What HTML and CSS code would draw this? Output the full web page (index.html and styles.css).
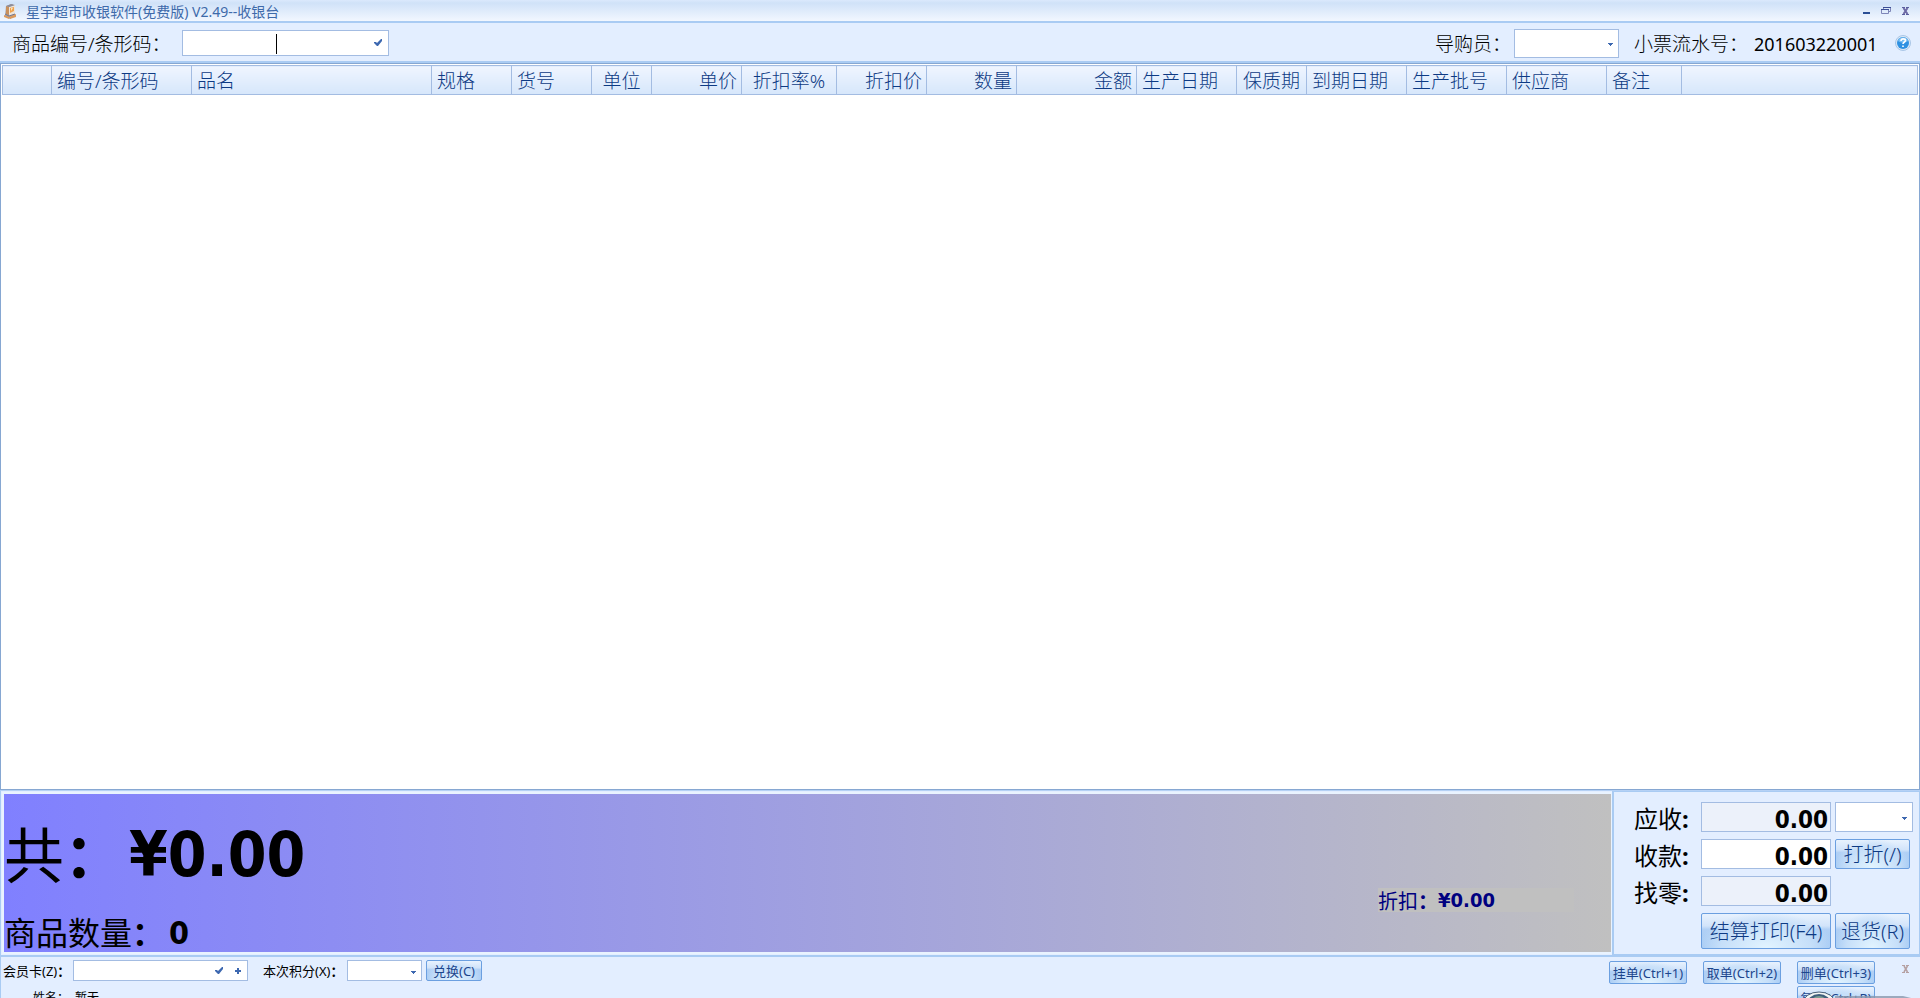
FILE: index.html
```html
<!DOCTYPE html>
<html lang="zh-CN">
<head>
<meta charset="utf-8">
<title>星宇超市收银软件(免费版) V2.49--收银台</title>
<link rel="stylesheet" href="styles.css">
</head>
<body>
<div class="window">
  <header class="titlebar">
    <svg class="app-icon" viewBox="0 0 16 18" aria-hidden="true">
      <path d="M4 4l6-2 3 2v9l-5 4-5-3z" fill="#a9a2a6"/>
      <path d="M4 4l3 1v8l-3-1z" fill="#c9905c"/>
      <path d="M7 5l6-2v9l-6 2z" fill="#ece4da"/>
      <path d="M4 4l5-2 4 1-6 2z" fill="#8e8d98"/>
      <path d="M8 6l4-1v4L8 11z" fill="#f0a24c"/>
      <path d="M9 6l2 0-2 3z" fill="#fbe3bd"/>
      <path d="M2 13l5 2v2l-5-2zM7 15l7-3v3l-6 2z" fill="#dc9a5c"/>
      <path d="M3 12l4 2 6-2" fill="none" stroke="#77768a"/>
    </svg>
    <h1 class="title">星宇超市收银软件(免费版) V2.49--收银台</h1>
    <div class="window-controls">
      <button class="plain" aria-label="最小化"><svg viewBox="0 0 10 10"><path d="M1 6h7v2H1z" fill="#2b4f96"/></svg></button>
      <button class="plain" aria-label="还原"><svg viewBox="0 0 10 10"><path d="M2.500 3V1.500h7V5.500H8M.5 3.500h7v4h-7z" fill="none" stroke="#7f86b8"/><path d="M2 1h8v1H2zM0 3h8v1H0z" fill="#3b4f96"/></svg></button>
      <button class="plain" aria-label="关闭"><svg viewBox="0 0 10 10"><path d="M3.500 2l4 6M7.500 2l-4 6" fill="none" stroke="#6d6aa5" stroke-width="2"/><path d="M2 1h3v1H2zM6 1h3v1H6zM2 8h3v1H2zM6 8h3v1H6z" fill="#5a5f9f"/></svg></button>
    </div>
  </header>

  <section class="toolbar">
    <label class="big-label code-label" for="code">商品编号/条形码：</label>
    <div class="field code-field">
      <input id="code" type="text">
      <span class="caret"></span>
      <svg class="tick" viewBox="0 0 8 8" aria-hidden="true"><path d="M0 3h2l1 1 4-4h1v2L4 7H3L0 4z" fill="#3d68b0"/></svg>
    </div>
    <label class="big-label guide-label" for="guide">导购员：</label>
    <div class="field guide-field">
      <select id="guide"><option></option></select>
      <svg class="arrow" viewBox="0 0 5 3" aria-hidden="true"><path d="M0 0h5v1H4v1H3v1H2V2H1V1H0z" fill="#3d68b0"/></svg>
    </div>
    <span class="big-label serial-label">小票流水号：</span>
    <output class="serial">201603220001</output>
    <button class="plain help" aria-label="帮助">
      <svg viewBox="0 0 16 16"><circle cx="8" cy="8" r="7.500" fill="#dbe8f6" stroke="#a9c6e6"/><circle cx="8" cy="8" r="6" fill="#2f91e2"/><path d="M3 6c1-5 9-5 10 0-3 2-7 2-10 0z" fill="#78bdf2"/><path d="M6 6c0-3 4.500-2.500 4.500-.5C10.500 7 8 7 8 9M8 10.500v1.500" fill="none" stroke="#fff" stroke-width="1.600"/></svg>
    </button>
  </section>

  <main class="grid-area">
    <table class="items">
      <colgroup><col class="w49"><col class="w140"><col class="w240"><col class="w80"><col class="w80"><col class="w60"><col class="w90"><col class="w95"><col class="w90"><col class="w90"><col class="w120"><col class="w100"><col class="w70"><col class="w100"><col class="w100"><col class="w100"><col class="w75"><col></colgroup>
      <thead><tr>
        <th></th><th>编号/条形码</th><th>品名</th><th>规格</th><th>货号</th><th class="center">单位</th><th class="right">单价</th><th class="center">折扣率%</th><th class="right">折扣价</th><th class="right">数量</th><th class="right">金额</th><th>生产日期</th><th class="center">保质期</th><th>到期日期</th><th>生产批号</th><th>供应商</th><th>备注</th><th></th>
      </tr></thead>
      <tbody></tbody>
    </table>
  </main>

  <section class="summary">
    <div class="totals">
      <div class="total"><span>共<b>：</b></span><strong>¥0.00</strong></div>
      <div class="count"><span>商品数量<b>：</b></span><strong>0</strong></div>
      <div class="discount"><span>折扣<b>：</b></span><strong>¥0.00</strong></div>
    </div>
    <form class="payment">
      <label for="due">应收<b>:</b></label>
      <input id="due" class="amount readonly" value="0.00" readonly>
      <div class="field method"><select aria-label="付款方式"><option></option></select>
        <svg class="arrow" viewBox="0 0 5 3" aria-hidden="true"><path d="M0 0h5v1H4v1H3v1H2V2H1V1H0z" fill="#3d68b0"/></svg></div>
      <label for="paid">收款<b>:</b></label>
      <input id="paid" class="amount" value="0.00">
      <button type="button" class="btn large side">打折(/)</button>
      <label for="change">找零<b>:</b></label>
      <input id="change" class="amount readonly" value="0.00" readonly>
      <button type="button" class="btn large settle">结算打印(F4)</button>
      <button type="button" class="btn large side refund">退货(R)</button>
    </form>
  </section>

  <footer class="footer">
    <div class="member">
      <div class="member-row">
        <label class="card-label" for="card">会员卡(Z)<b>：</b></label>
        <div class="field card-field"><input id="card" type="text">
          <svg class="tick" viewBox="0 0 8 8" aria-hidden="true"><path d="M0 3h2l1 1 4-4h1v2L4 7H3L0 4z" fill="#3d68b0"/></svg>
          <svg class="plus" viewBox="0 0 6 6" aria-hidden="true"><path d="M2 0h2v2h2v2H4v2H2V4H0V2h2z" fill="#3d68b0"/></svg></div>
        <label class="points-label" for="points">本次积分(X)<b>：</b></label>
        <div class="field points-field"><select id="points"><option></option></select>
          <svg class="arrow" viewBox="0 0 5 3" aria-hidden="true"><path d="M0 0h5v1H4v1H3v1H2V2H1V1H0z" fill="#3d68b0"/></svg></div>
        <button class="btn small exchange">兑换(C)</button>
      </div>
      <div class="name-row"><span class="name-label">姓名：</span><span>暂无</span></div>
    </div>
    <div class="orders">
      <button class="btn small">挂单(Ctrl+1)</button>
      <button class="btn small">取单(Ctrl+2)</button>
      <button class="btn small">删单(Ctrl+3)</button>
      <button class="btn small reprint">复制(Ctrl+R)</button>
    </div>
    <button class="plain dismiss" aria-label="关闭面板"><svg viewBox="0 0 8 8"><path d="M2 1l3.500 6M5.500 1L2 7" fill="none" stroke="#b5a0a2" stroke-width="1.500"/><path d="M0 0h3v1H0zM4 0h3v1H4zM0 7h3v1H0zM4 7h3v1H4z" fill="#b5a0a2"/></svg></button>
    <svg class="badge" viewBox="0 0 110 7" aria-hidden="true">
      <path d="M34 5h68l8 2H34z" fill="#8a97ac" opacity=".8"/>
      <ellipse cx="18" cy="12" rx="16" ry="11" fill="#f3f6f4" stroke="#49617a"/>
      <ellipse cx="18" cy="13" rx="12" ry="10" fill="#3f5f7c"/>
      <ellipse cx="18" cy="14" rx="9" ry="9" fill="#7d9e92"/>
    </svg>
  </footer>
</div>
</body>
</html>
```
FILE: styles.css
```css
* { box-sizing: border-box; }
html, body { height: 100%; margin: 0; }
body {
  overflow: hidden;
  background: #e3eeff;
  color: #000;
  font-family: "Noto Sans", "Noto Sans CJK SC", sans-serif;
  font-size: 12px;
}
button, input, select { font: inherit; color: inherit; margin: 0; padding: 0; }
svg { display: block; }
.window { display: flex; flex-direction: column; height: 100vh; }
.plain { border: 0; background: none; }

.titlebar {
  flex: none;
  display: flex;
  align-items: center;
  height: 21px;
  padding: 0 10px 0 2px;
  background: linear-gradient(#dbe9fc 0, #d0e2f8 3px, #f2f7ff 21px);
}
.app-icon { width: 16px; height: 18px; }
.title { margin: 3px 0 0 8px; font-size: 14px; line-height: 18px; font-weight: 400; color: #3e6aaa; }
.window-controls { display: flex; gap: 9px; margin-left: auto; }
.window-controls svg { width: 10px; height: 10px; }

.toolbar {
  flex: none;
  display: flex;
  align-items: center;
  height: 42px;
  padding: 2px 9px 0 12px;
  border-top: 2px solid #a9cbf3;
  border-bottom: 2px solid #a9cbf3;
  background: #e3eeff;
}
.big-label { padding-top: 2px; font-size: 19px; line-height: 24px; white-space: nowrap; font-weight: 300; }
.code-label { width: 170px; }
.field { position: relative; border: 1px solid #a3bce2; background: #fff; }
.field input, .field select {
  display: block;
  width: 100%;
  height: 100%;
  border: 0;
  outline: 0;
  background: transparent;
  appearance: none;
}
.arrow { position: absolute; right: 5px; top: 50%; width: 5px; height: 3px; pointer-events: none; }
.tick { position: absolute; right: 6px; top: 8px; width: 8px; height: 8px; }
.code-field { width: 207px; height: 26px; }
.caret { position: absolute; left: 93px; top: 3px; width: 1px; height: 20px; background: #000; }
.guide-label { margin-left: auto; width: 79px; }
.guide-field { width: 105px; height: 29px; }
.serial-label { width: 120px; margin-left: 15px; }
.serial { width: 141px; padding-top: 2px; font-size: 18px; line-height: 24px; }
.help svg { width: 16px; height: 16px; }

.grid-area {
  flex: 1;
  min-height: 0;
  border: 1px solid #86a7d2;
  background: #fff;
  padding: 1px;
}
.items { width: 100%; table-layout: fixed; border-collapse: collapse; }
.items th {
  height: 29px;
  padding: 2px 5px 0;
  border: 1px solid #a3bce2;
  background: linear-gradient(#eff5ff, #d6e7fb);
  color: #0d3a84;
  font-size: 19px;
  line-height: 24px;
  font-weight: 300;
  text-align: left;
  white-space: nowrap;
}
.items .center { text-align: center; }
.items .right { text-align: right; padding-right: 4px; }
.w49 { width: 49px; } .w140 { width: 140px; } .w240 { width: 240px; }
.w80 { width: 80px; } .w60 { width: 60px; } .w90 { width: 90px; }
.w95 { width: 95px; } .w120 { width: 120px; } .w100 { width: 100px; }
.w70 { width: 70px; } .w75 { width: 75px; }

.summary {
  flex: none;
  display: flex;
  height: 165px;
  border-top: 1px solid #b5d1f5;
  border-left: 1px solid #a9cbf3;
}
.totals {
  position: relative;
  flex: 1;
  margin: 1px 0 1px 1px;
  border: 2px solid #e9f3ff;
  border-right-width: 1px;
  background: linear-gradient(90deg, #8080ff, #c0c0c0);
  background-clip: padding-box;
  display: flex;
  flex-direction: column;
  justify-content: space-between;
  padding: 23px 0 1px 0;
}
.totals strong, .amount { font-family: "DejaVu Sans Condensed", "Noto Sans", sans-serif; }
.total, .count { display: flex; align-items: center; gap: 5px; }
.total { font-size: 60px; line-height: 76px; }
.total strong { font-size: 62px; }
.count { font-size: 32px; line-height: 36px; }
.discount {
  position: absolute;
  right: 37px;
  bottom: 40px;
  width: 196px;
  height: 24px;
  display: flex;
  align-items: center;
  background: #c0c0c0;
  color: #000080;
  font-size: 20px;
}
.payment {
  flex: none;
  width: 308px;
  display: grid;
  grid-template-columns: 63px 130px 78px;
  grid-template-rows: 30px 30px 30px 36px;
  gap: 7px 4px;
  padding: 10px 0 0 20px;
  border: 1px solid #a9cbf3;
  border-left-width: 2px;
}
.payment label { font-size: 24px; line-height: 34px; white-space: nowrap; }
.amount {
  width: 130px;
  height: 30px;
  padding: 6px 2px 0 0;
  border: 1px solid #a3bce2;
  background: #fff;
  font-size: 24px;
  font-weight: 700;
  text-align: right;
}
.amount.readonly { background: #ecf1fa; }
.settle { grid-column: 2; grid-row: 4; }
.side { width: 75px; }
.refund { grid-column: 3; grid-row: 4; }
.btn {
  border: 1px solid #6b9fe0;
  border-radius: 2px;
  background: radial-gradient(ellipse at 50% 100%, #e2f4ff 0, #c6dff9 50%, transparent 75%), linear-gradient(#e8f2fe 0, #d2e4fa 35%, #b1d0f5 45%, #a5caf4);
  color: #1c468d;
  white-space: nowrap;
}
.large { padding-top: 2px; color: #0d3a84; font-size: 20px; font-weight: 300; line-height: 24px; }
.small { font-size: 13px; line-height: 18px; }

.footer {
  position: relative;
  flex: none;
  display: flex;
  height: 43px;
  overflow: hidden;
  border-top: 2px solid #a9cbf3;
  border-left: 1px solid #a9cbf3;
  padding: 3px 10px 0 2px;
}
.member-row { display: flex; align-items: center; height: 21px; }
.member-row label { font-size: 13px; white-space: nowrap; }
.card-label { width: 70px; }
.card-field { width: 175px; height: 21px; }
.card-field .tick { right: 24px; top: 6px; }
.plus { position: absolute; right: 6px; top: 7px; width: 6px; height: 6px; }
.points-label { margin-left: 15px; width: 84px; }
.points-field { width: 75px; height: 21px; }
.exchange { width: 56px; height: 21px; margin-left: 4px; }
.name-row { display: flex; margin-top: 8px; padding-left: 30px; line-height: 18px; }
.name-label { width: 42px; }
.orders {
  display: grid;
  grid-template-columns: 78px 78px 78px;
  grid-auto-rows: 23px;
  gap: 2px 16px;
  margin: 1px 0 0 auto;
}
.reprint { grid-column: 3; }
.dismiss { align-self: flex-start; margin: 5px 0 0 27px; }
.dismiss svg { width: 8px; height: 8px; }
.badge { position: absolute; right: 9px; bottom: 0; width: 110px; height: 7px; }
```
